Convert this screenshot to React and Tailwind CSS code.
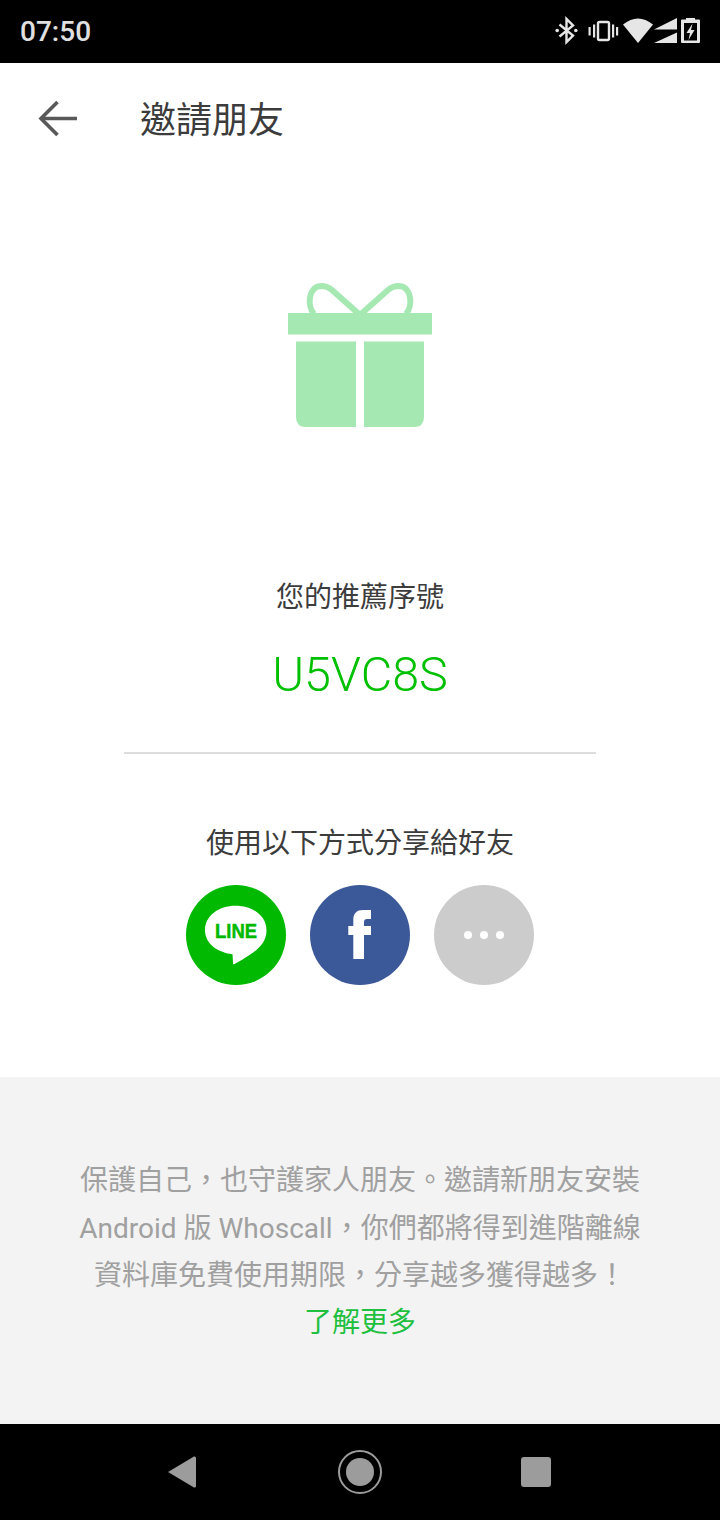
const cjk = "font-['Roboto','Noto_Sans_CJK_TC',sans-serif]";

function StatusIcons() {
  return (
    <svg width="150" height="31" viewBox="0 0 150 31" className="shrink-0" fill="#e6e6e6">
      {/* bluetooth */}
      <path d="M9.5 8.5 L23 19.5 L16.5 26 L16.5 3 L23 9.5 L9.5 20.5" fill="none" stroke="#e6e6e6" strokeWidth="2.4" />
      <circle cx="7.2" cy="14.5" r="1.8" />
      <circle cx="25.8" cy="14.5" r="1.8" />
      {/* vibrate */}
      <rect x="48" y="6" width="11" height="18" rx="1.5" fill="none" stroke="#e6e6e6" strokeWidth="2.4" />
      <rect x="43" y="8.5" width="2.2" height="13" />
      <rect x="38.5" y="11" width="2.2" height="8.5" />
      <rect x="62" y="8.5" width="2.2" height="13" />
      <rect x="66" y="11" width="2.2" height="8.5" />
      {/* wifi */}
      <path d="M73 8.5 Q88 -3.5 103 8.5 L88 27 Z" />
      {/* signal */}
      <path d="M127 2 L127 13.5 L104 13.5 Z" />
      <path d="M127 16.5 L127 27 L104 27 Z" />
      {/* battery */}
      <path fillRule="evenodd" d="M136 2 H145 V3.5 H149 Q150 3.5 150 4.5 V26 Q150 27 149 27 H132 Q131 27 131 26 V4.5 Q131 3.5 132 3.5 H136 Z M134 7 V24.5 H147 V7 Z" />
      <path d="M142.5 7.5 L136.5 17 H140 L138.5 24 L144.5 14 H141 Z" />
    </svg>
  );
}

function Gift() {
  return (
    <svg width="144" height="147" viewBox="0 -3 144 147" fill="#a6e8b2">
      <path d="M26 30 C19 22 20 2 33.5 2 C38 2 41 3.5 44 6 L72 31 L100 6 C103 3.5 106 2 110.5 2 C124 2 125 22 118 30" fill="none" stroke="#a6e8b2" strokeWidth="6" />
      <rect x="0" y="29" width="144" height="21.5" />
      <path d="M8 57.5 H68 V143 H18 Q8 143 8 133 Z" />
      <path d="M76 57.5 H136 V133 Q136 143 126 143 H76 Z" />
    </svg>
  );
}

function LineIcon() {
  return (
    <svg width="100" height="100" viewBox="0 0 100 100">
      <circle cx="50" cy="50" r="50" fill="#00b900" />
      <path d="M49.5 20.7 C32.5 20.7 19 31 19 45 C19 58 30 67 46.5 69.3 L47 78 C47 79.5 47.5 79.5 48.5 79 C55 75.5 66 69 72 63.5 C77.5 58.5 80.5 52.5 80.5 45 C80.5 31 67 20.7 49.5 20.7 Z" fill="#fff" />
      <text x="29" y="53" textLength="42" lengthAdjust="spacingAndGlyphs" fontFamily="'Liberation Sans',sans-serif" fontWeight="700" fontSize="21" fill="#00b900" stroke="#00b900" strokeWidth="0.5">LINE</text>
    </svg>
  );
}

function FacebookIcon() {
  return (
    <svg width="100" height="100" viewBox="0 0 100 100">
      <circle cx="50" cy="50" r="50" fill="#3b5998" />
      <path d="M43.3 74 V50 H38.3 V41 H43.3 V35 C43.3 28 47 25 53 25 H61 V34 H57 C55 34 54 35 54 37 V41 H61 V50 H54 V74 Z" fill="#fff" />
    </svg>
  );
}

function NavBar() {
  return (
    <div className="h-24 bg-black relative shrink-0">
      <svg className="absolute left-[160px] top-[20px]" width="400" height="60" viewBox="0 0 400 60" fill="#9c9c9c">
        <path d="M8 28 L34 12.5 Q36 12 36 14 V42 Q36 44 34 43.5 Z" />
        <circle cx="200" cy="28" r="21" fill="none" stroke="#9c9c9c" strokeWidth="2" />
        <circle cx="200" cy="28" r="14" />
        <rect x="361" y="13" width="30" height="30" rx="3" />
      </svg>
    </div>
  );
}

export default function App() {
  return (
    <div className={`${cjk} w-[720px] h-[1520px] flex flex-col bg-white overflow-hidden`}>
      <div className="h-[63px] bg-black flex items-center justify-between pl-[20px] pr-[20px] shrink-0">
        <span className="text-[28px] text-[#e0e0e0] font-medium leading-none font-['Roboto',sans-serif]">07:50</span>
        <StatusIcons />
      </div>

      <header className="h-[114px] flex items-center pl-[36px] shrink-0">
        <svg width="44" height="44" viewBox="0 0 44 44" fill="none" stroke="#595959" strokeWidth="3.6">
          <path d="M41 20.5 H6" />
          <path d="M21.5 4 L5 20.5 L21.5 37" />
        </svg>
        <h1 className="ml-[60px] pt-[2px] text-[36px] leading-none text-[#3c3c3c] font-normal">邀請朋友</h1>
      </header>

      <div className="flex justify-center pt-[104px] shrink-0">
        <Gift />
      </div>

      <p className="mt-[150px] text-center text-[28px] leading-[40px] text-[#3c3c3c]">您的推薦序號</p>
      <p className="mt-[31px] text-center text-[48.5px] leading-[52px] text-[#00c000] font-light">U5VC8S</p>

      <div className="mt-[51px] mx-[124px] h-[2px] bg-[#dcdcdc] shrink-0" />

      <p className="mt-[70px] text-center text-[28px] leading-[40px] text-[#3c3c3c]">使用以下方式分享給好友</p>

      <div className="mt-[21px] flex justify-center gap-[24px] shrink-0">
        <LineIcon />
        <FacebookIcon />
        <div className="w-[100px] h-[100px] rounded-full bg-[#cccccc] flex items-center justify-center gap-[8px]">
          <span className="w-[8px] h-[8px] rounded-full bg-white" />
          <span className="w-[8px] h-[8px] rounded-full bg-white" />
          <span className="w-[8px] h-[8px] rounded-full bg-white" />
        </div>
      </div>

      <div className="mt-[92px] flex-1 bg-[#f3f3f3] pt-[80px] text-center text-[28px] leading-[47px] text-[#a0a0a0]">
        <p className="leading-[48px]">保護自己，也守護家人朋友。邀請新朋友安裝</p>
        <p>Android 版 Whoscall，你們都將得到進階離線</p>
        <p className="leading-[48px]">資料庫免費使用期限，分享越多獲得越多！</p>
        <p className="text-[#1fbf3f] leading-[46px]">了解更多</p>
      </div>

      <NavBar />
    </div>
  );
}
